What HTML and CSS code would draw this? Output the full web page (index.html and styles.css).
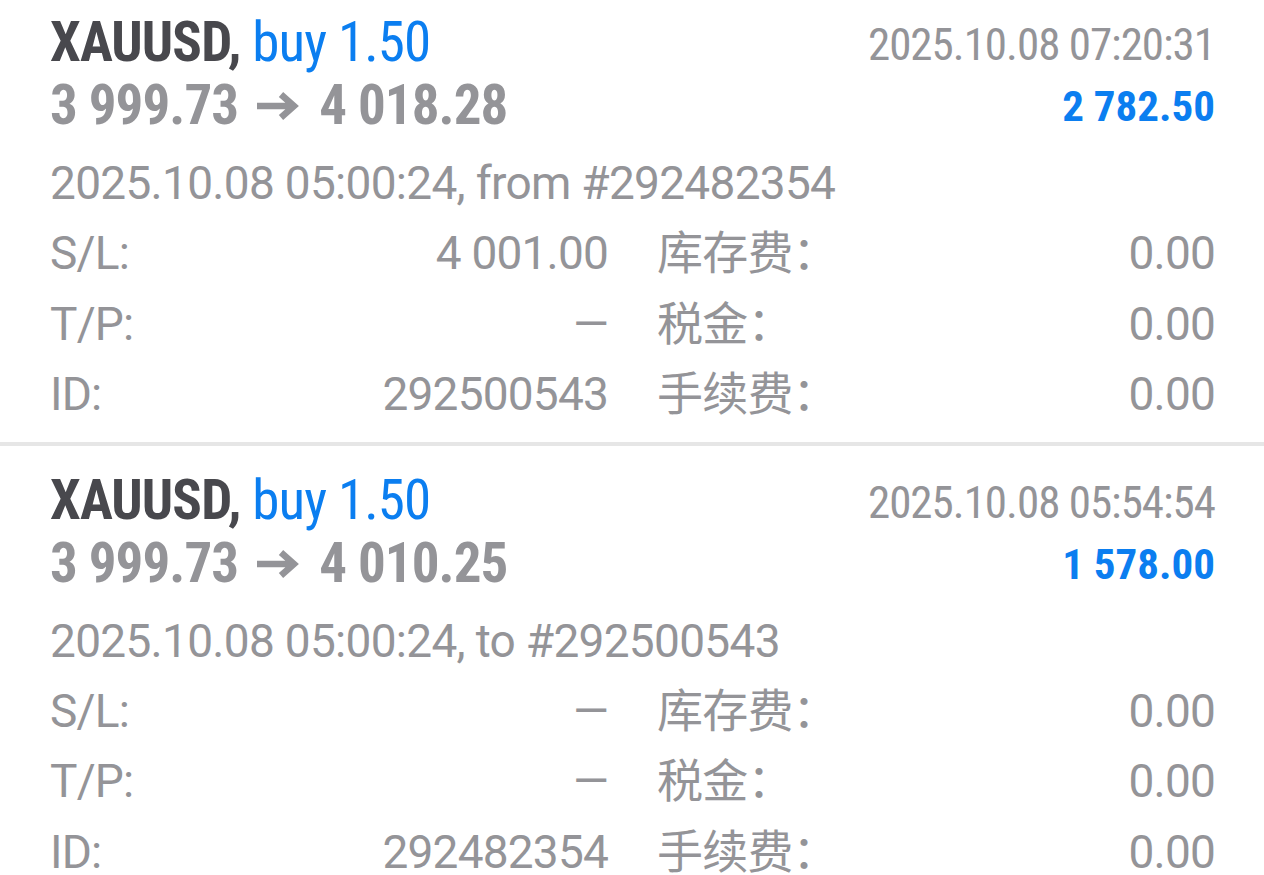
FILE: index.html
```html
<!DOCTYPE html>
<html lang="zh-CN">
<head>
<meta charset="utf-8">
<title>History</title>
<link rel="stylesheet" href="styles.css">
</head>
<body>
<div class="list">
  <section class="trade">
    <div class="head">
      <div class="title"><span class="sym">XAUUSD,</span> <span class="type">buy 1.50</span></div>
      <div class="time">2025.10.08 07:20:31</div>
      <div class="prices"><span>3 999.73</span><svg class="arrow" viewBox="0 0 46 30" width="46" height="30" aria-hidden="true"><path d="M2 15H39M26 3.5L39 15L26 26.5"/></svg><span>4 018.28</span></div>
      <div class="profit">2 782.50</div>
    </div>
    <div class="comment">2025.10.08 05:00:24, from #292482354</div>
    <div class="details">
      <div class="pair"><span>S/L:</span><span>4 001.00</span></div>
      <div class="pair"><span>库存费：</span><span>0.00</span></div>
      <div class="pair"><span>T/P:</span><span>—</span></div>
      <div class="pair"><span>税金：</span><span>0.00</span></div>
      <div class="pair"><span>ID:</span><span>292500543</span></div>
      <div class="pair"><span>手续费：</span><span>0.00</span></div>
    </div>
  </section>
  <section class="trade">
    <div class="head">
      <div class="title"><span class="sym">XAUUSD,</span> <span class="type">buy 1.50</span></div>
      <div class="time">2025.10.08 05:54:54</div>
      <div class="prices"><span>3 999.73</span><svg class="arrow" viewBox="0 0 46 30" width="46" height="30" aria-hidden="true"><path d="M2 15H39M26 3.5L39 15L26 26.5"/></svg><span>4 010.25</span></div>
      <div class="profit">1 578.00</div>
    </div>
    <div class="comment">2025.10.08 05:00:24, to #292500543</div>
    <div class="details">
      <div class="pair"><span>S/L:</span><span>—</span></div>
      <div class="pair"><span>库存费：</span><span>0.00</span></div>
      <div class="pair"><span>T/P:</span><span>—</span></div>
      <div class="pair"><span>税金：</span><span>0.00</span></div>
      <div class="pair"><span>ID:</span><span>292482354</span></div>
      <div class="pair"><span>手续费：</span><span>0.00</span></div>
    </div>
  </section>
</div>
</body>
</html>
```
FILE: styles.css
```css
html, body {
  margin: 0;
  padding: 0;
  background: #ffffff;
}
body {
  font-family: Roboto, "Noto Sans CJK SC", sans-serif;
  color: #949498;
  overflow: hidden;
}
.trade {
  padding: 24px 49px 25.5px 50px;
  border-bottom: 4px solid #e6e6e6;
}
.trade:first-child {
  padding-top: 12px;
}
.head {
  display: grid;
  grid-template-columns: 1fr auto;
  align-items: start;
  font-family: "Roboto Condensed", Roboto, sans-serif;
}
.title {
  font-size: 55px;
  line-height: 61px;
  letter-spacing: -0.9px;
  white-space: nowrap;
}
.sym {
  font-weight: 700;
  color: #48484d;
}
.type {
  color: #0b7ef0;
}
.time {
  padding-top: 2px;
  font-size: 45px;
  line-height: 61px;
  letter-spacing: -1px;
  text-align: right;
}
.prices {
  font-size: 55px;
  line-height: 61px;
  font-weight: 700;
  letter-spacing: -0.9px;
  white-space: nowrap;
}
.arrow {
  margin: 0 18px 0 17px;
  vertical-align: 3px;
  fill: none;
  stroke: #949498;
  stroke-width: 6.5;
}
.profit {
  padding-top: 2px;
  font-size: 43px;
  line-height: 58px;
  font-weight: 700;
  color: #0b7ef0;
  text-align: right;
}
.comment {
  margin-top: 12px;
  font-size: 46px;
  line-height: 70px;
  letter-spacing: -0.7px;
  white-space: nowrap;
}
.details {
  display: grid;
  grid-template-columns: 1fr 1fr;
  column-gap: 49px;
  row-gap: 26.5px;
  margin-top: 13px;
}
.pair {
  display: flex;
  justify-content: space-between;
  font-size: 46px;
  line-height: 44px;
  letter-spacing: -0.8px;
}
```
